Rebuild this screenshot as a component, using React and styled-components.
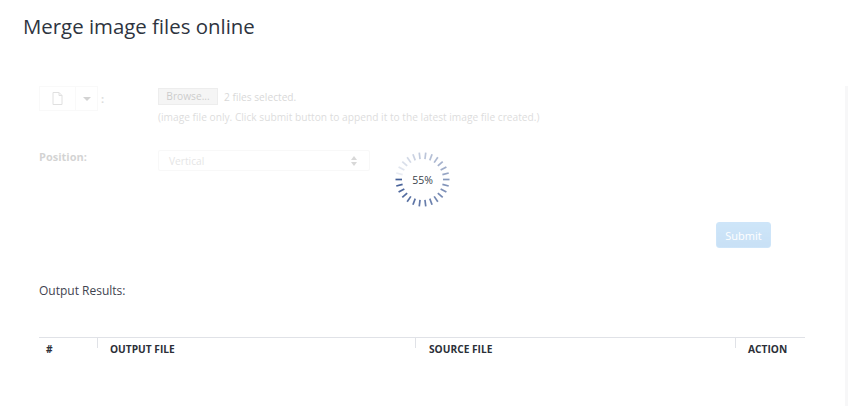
import React from "react";
import styled, { createGlobalStyle } from "styled-components";

const GlobalStyle = createGlobalStyle`
  html, body {
    margin: 0;
    background: #fff;
    font-family: "Open Sans", "Liberation Sans", sans-serif;
    color: #3a3f4b;
  }
`;

const Page = styled.div`
  width: 850px;
  height: 406px;
  overflow: hidden;
  box-sizing: border-box;
`;

const Title = styled.h1`
  margin: 0;
  padding: 12px 0 0 23px;
  height: 86px;
  box-sizing: border-box;
  font-size: 20.4px;
  line-height: 29px;
  font-weight: 400;
  color: #2e3440;
`;

const Panel = styled.section`
  position: relative;
  width: 848px;
  height: 320px;
  box-sizing: border-box;
  padding-left: 39px;
  border-right: 3px solid #f7f7f8;
`;

const Form = styled.form`
  opacity: 0.25;
  width: 732px;
  height: 177px;
  margin: 0;
  display: flex;
  flex-direction: column;
`;

const Row = styled.div`
  display: grid;
  grid-template-columns: 119px 1fr;
`;

const FileRow = styled(Row)`
  height: 64px;
`;

const ActionRow = styled.div`
  display: flex;
  justify-content: flex-end;
  margin-top: 51px;
`;

const IconGroup = styled.div`
  display: flex;
  align-items: center;
  height: 25px;
  font-size: 11px;
  font-weight: 700;
  color: #777;
`;

const IconButton = styled.div`
  width: ${(p) => p.$width}px;
  height: 25px;
  box-sizing: border-box;
  display: flex;
  align-items: center;
  justify-content: center;
  border: 1px solid #eaeaea;
  margin-left: ${(p) => (p.$joined ? "-1px" : "0")};
  margin-right: ${(p) => (p.$joined ? "3px" : "0")};
`;

const Caret = styled.span`
  width: 0;
  height: 0;
  border-left: 4px solid transparent;
  border-right: 4px solid transparent;
  border-top: 4px solid #555;
`;

const FileLine = styled.div`
  display: flex;
  align-items: center;
  gap: 6px;
  margin-top: 2px;
  height: 17px;
  font-size: 10.2px;
  color: #666;
`;

const Browse = styled.span`
  width: 60px;
  height: 17px;
  box-sizing: border-box;
  border: 1px solid #bbb;
  background: #d8d8d8;
  text-align: center;
  font-size: 10.2px;
  line-height: 15px;
  color: #333;
`;

const Hint = styled.p`
  margin: 4px 0 0;
  font-size: 10.2px;
  line-height: 16px;
  color: #777;
`;

const Label = styled.label`
  margin-top: -1px;
  font-size: 11px;
  line-height: 15px;
  font-weight: 700;
  color: #555;
`;

const PositionRow = styled(Row)`
  height: 21px;
`;

const SelectBox = styled.div`
  width: 212px;
  height: 21px;
  box-sizing: border-box;
  display: flex;
  align-items: center;
  justify-content: space-between;
  padding: 0 12px 0 10px;
  border: 1px solid #e6e6e6;
  border-radius: 2px;
  font-size: 10.2px;
  color: #999;
`;

const Arrows = styled.span`
  display: flex;
  flex-direction: column;
  gap: 2px;
  i {
    width: 0;
    height: 0;
    border-left: 3px solid transparent;
    border-right: 3px solid transparent;
  }
  i:first-child {
    border-bottom: 4px solid #666;
  }
  i:last-child {
    border-top: 4px solid #666;
  }
`;

const SubmitButton = styled.button`
  width: 55px;
  height: 26px;
  padding: 0;
  border: 1px solid #3f9ce8;
  border-radius: 3px;
  background: linear-gradient(#3f9ce8, #2a88dc);
  color: #fff;
  font-family: inherit;
  font-size: 11px;
`;

const Spinner = styled.div`
  position: absolute;
  left: 394px;
  top: 65px;
  width: 57px;
  height: 57px;
  display: flex;
  align-items: center;
  justify-content: center;
`;

const SpinnerSvg = styled.svg`
  position: absolute;
  inset: 0;
`;

const Percent = styled.span`
  position: relative;
  font-size: 10.5px;
  color: #3a3f4b;
`;

const ResultsLabel = styled.h2`
  margin: 20px 0 0;
  font-size: 12px;
  line-height: 16px;
  font-weight: 400;
  color: #3f4450;
`;

const Table = styled.table`
  width: 766px;
  margin-top: 38px;
  border-collapse: collapse;
  table-layout: fixed;
  border-top: 1px solid #e0e2e7;
`;

const Th = styled.th`
  position: relative;
  width: ${(p) => p.$width}px;
  height: 22px;
  padding: 0 0 0 ${(p) => p.$pad}px;
  box-sizing: border-box;
  text-align: left;
  text-transform: uppercase;
  font-size: 10.2px;
  font-weight: 700;
  color: #2c2f38;
  &:not(:last-child)::after {
    content: "";
    position: absolute;
    top: 0;
    right: 0;
    width: 1px;
    height: 10px;
    background: #e0e2e7;
  }
`;

const TICKS = 26;

// dark at 9 o'clock, fading counter-clockwise round the ring
const ticks = Array.from({ length: TICKS }, (_, i) => ({
  angle: -90 - (i * 360) / TICKS,
  opacity: i < 14 ? 0.9 - i * 0.025 : Math.max(0.1, 0.5 - (i - 14) * 0.036),
}));

const App = () => (
  <Page>
    <GlobalStyle />
    <Title>Merge image files online</Title>
    <Panel>
      <Form>
        <FileRow>
          <IconGroup>
            <IconButton $width={37}>
              <svg width="11" height="13" viewBox="0 0 11 13" fill="none" stroke="#888" strokeWidth="1">
                <path d="M1 .5h6l3 3v9H1z" />
                <path d="M7 .5v3h3" />
              </svg>
            </IconButton>
            <IconButton $width={23} $joined>
              <Caret />
            </IconButton>
            :
          </IconGroup>
          <div>
            <FileLine>
              <Browse>Browse...</Browse>
              2 files selected.
            </FileLine>
            <Hint>(image file only. Click submit button to append it to the latest image file created.)</Hint>
          </div>
        </FileRow>
        <PositionRow>
          <Label>Position:</Label>
          <SelectBox>
            Vertical
            <Arrows>
              <i />
              <i />
            </Arrows>
          </SelectBox>
        </PositionRow>
        <ActionRow>
          <SubmitButton type="button">Submit</SubmitButton>
        </ActionRow>
      </Form>
      <Spinner>
        <SpinnerSvg width="57" height="57" viewBox="0 0 57 57">
          {ticks.map((t) => (
            <line
              key={t.angle}
              x1="28.5"
              y1="1.5"
              x2="28.5"
              y2="8"
              stroke="#2f4d8c"
              strokeWidth="1.7"
              opacity={t.opacity}
              transform={`rotate(${t.angle} 28.5 28.5)`}
            />
          ))}
        </SpinnerSvg>
        <Percent>55%</Percent>
      </Spinner>
      <ResultsLabel>Output Results:</ResultsLabel>
      <Table>
        <thead>
          <tr>
            <Th $width={59} $pad={7}>#</Th>
            <Th $width={318} $pad={12}>Output File</Th>
            <Th $width={320} $pad={13}>Source File</Th>
            <Th $width={69} $pad={12}>Action</Th>
          </tr>
        </thead>
      </Table>
    </Panel>
  </Page>
);

export default App;
